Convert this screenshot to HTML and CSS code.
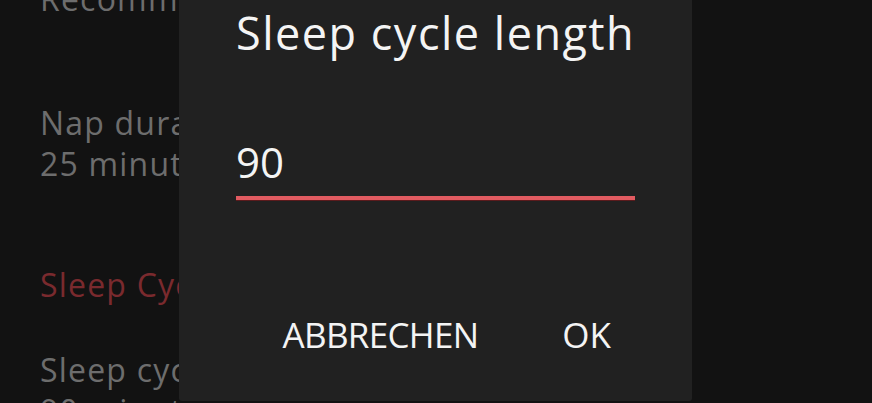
FILE: index.html
```html
<!DOCTYPE html>
<html>
<head>
<meta charset="utf-8">
<link rel="stylesheet" href="styles.css">
</head>
<body>
<div class="screen">
  <div class="prefs">
    <div class="pref-sub first">Recommended</div>
    <div class="pref">
      <div class="pref-title">Nap duration</div>
      <div class="pref-sub">25 minutes</div>
    </div>
    <div class="pref-header">Sleep Cycle</div>
    <div class="pref">
      <div class="pref-title">Sleep cycle length</div>
      <div class="pref-sub">90 minutes</div>
    </div>
  </div>
  <div class="dialog">
    <div class="dialog-title">Sleep cycle length</div>
    <div class="field">90</div>
    <div class="actions">
      <span class="btn">ABBRECHEN</span>
      <span class="btn">OK</span>
    </div>
  </div>
</div>
</body>
</html>
```
FILE: styles.css
```css
html, body {
  margin: 0;
  padding: 0;
  background: #121212;
}
.screen {
  position: relative;
  width: 872px;
  height: 403px;
  overflow: hidden;
  font-family: "Open Sans", "Noto Sans", sans-serif;
}
.prefs {
  display: flex;
  flex-direction: column;
  width: 139px;
  overflow: hidden;
  padding-left: 40px;
  margin-top: -22px;
  font-size: 32px;
  line-height: 41px;
  letter-spacing: 1.2px;
  color: #6d6d6d;
  white-space: nowrap;
}
.pref-sub.first {
  margin-bottom: 83px;
}
.pref-header {
  color: #7a2a2e;
  margin-top: 80px;
  margin-bottom: 44px;
}
.dialog {
  position: absolute;
  left: 179px;
  top: 0;
  width: 513px;
  height: 401px;
  box-sizing: border-box;
  background: #212121;
  border-radius: 0 0 3px 3px;
  padding: 10px 57px 0 57px;
  display: flex;
  flex-direction: column;
  color: #f4f4f4;
  line-height: 1;
}
.dialog-title {
  font-size: 45px;
  letter-spacing: 1.5px;
  white-space: nowrap;
}
.field {
  margin-top: 86px;
  font-size: 42px;
  padding-bottom: 13px;
  border-bottom: 4px solid #e25b61;
  box-shadow: 0 1px 0 #5a1a1c;
  width: 399px;
}
.actions {
  margin-top: 117px;
  display: flex;
  justify-content: flex-end;
  gap: 84px;
  padding-right: 24px;
  font-size: 35px;
}
.btn {
  white-space: nowrap;
}
.btn:first-child {
  letter-spacing: -0.7px;
}
```
